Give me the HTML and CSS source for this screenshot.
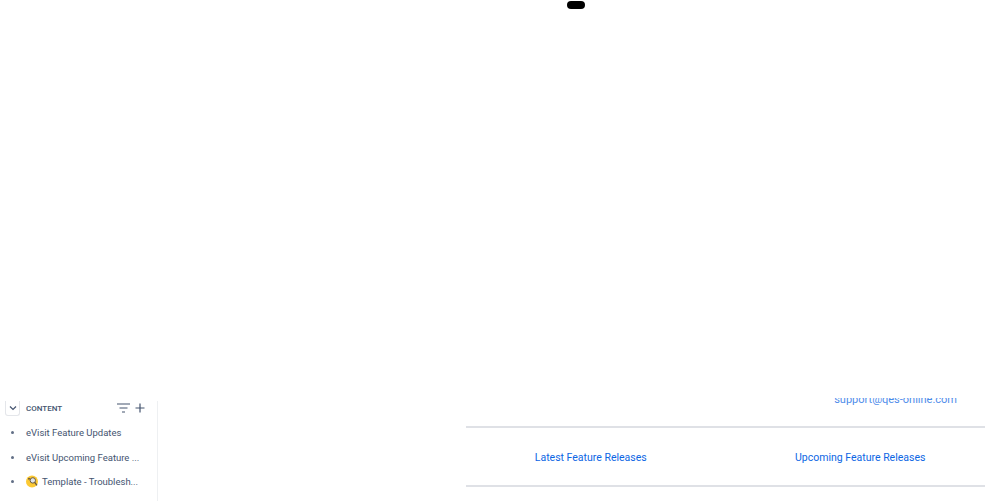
FILE: index.html
```html
<!DOCTYPE html>
<html lang="en">
<head>
<meta charset="utf-8">
<title>eVisit</title>
<link rel="stylesheet" href="styles.css">
</head>
<body>
<div class="pill"></div>
<div class="blank"></div>
<div class="stage">
  <aside class="sidebar">
    <div class="side-head">
      <button class="toggle" aria-label="Collapse">
        <svg width="8" height="6" viewBox="0 0 8 6"><path d="M1 1.5 4 4.5 7 1.5" fill="none" stroke="#44546f" stroke-width="1.2"/></svg>
      </button>
      <span class="side-title">CONTENT</span>
      <svg class="filter" width="13" height="10" viewBox="0 0 13 10"><path d="M0 1h13M2.5 5h8M5 9h3" fill="none" stroke="#44546f" stroke-width="1.2"/></svg>
      <svg class="plus" width="10" height="10" viewBox="0 0 10 10"><path d="M5 .5v9M.5 5h9" fill="none" stroke="#44546f" stroke-width="1.2"/></svg>
    </div>
    <ul class="tree">
      <li class="tree-item"><span class="bullet"></span><span class="label">eVisit Feature Updates</span></li>
      <li class="tree-item"><span class="bullet"></span><span class="label">eVisit Upcoming Feature ...</span></li>
      <li class="tree-item"><span class="bullet"></span>
        <svg class="emoji" width="12" height="13" viewBox="0 0 12 13"><circle cx="6" cy="6.5" r="6" fill="#fcc934"/><circle cx="6.8" cy="5.4" r="2.7" fill="#dfe3e8" stroke="#6b5a3c" stroke-width="1"/><circle cx="3" cy="3.8" r="1" fill="#6b5a3c"/><path d="M8.8 7.5 11 10.4" stroke="#6b5a3c" stroke-width="1.3"/></svg>
        <span class="label">Template - Troublesh...</span></li>
    </ul>
  </aside>
  <main class="content">
    <div class="row-contact"><a class="link contact">support@qes-online.com</a></div>
    <div class="row-links">
      <a class="link">Latest Feature Releases</a>
      <a class="link">Upcoming Feature Releases</a>
    </div>
  </main>
</div>
</body>
</html>
```
FILE: styles.css
```css
html, body {
  margin: 0;
  height: 501px;
  overflow: hidden;
  background: #fff;
  font-family: Roboto, "Noto Sans", sans-serif;
}
.pill {
  position: absolute;
  left: 567px;
  top: 1px;
  width: 18px;
  height: 8px;
  border-radius: 4px;
  background: #000;
}
.blank { height: 398px; }
.stage {
  display: flex;
  height: 103px;
}
.sidebar {
  width: 157px;
  margin-top: 3px;
  border-right: 1px solid #eef0f2;
  flex: none;
}
.side-head {
  display: flex;
  align-items: center;
  height: 14px;
  padding-left: 5px;
}
.toggle {
  width: 15px;
  height: 15px;
  padding: 0;
  display: flex;
  align-items: center;
  justify-content: center;
  background: #fff;
  border: 1px solid #e4e6ea;
  border-top: 0;
  border-radius: 0 0 3px 3px;
}
.side-title {
  margin-left: 6px;
  font-size: 8px;
  font-weight: 500;
  color: #44546f;
  flex: 1;
}
.filter { margin-right: 5px; }
.plus { margin-right: 12px; }
.tree {
  list-style: none;
  margin: 5.5px 0 0;
  padding: 0;
}
.tree-item {
  display: flex;
  align-items: center;
  height: 24.5px;
  font-size: 9.5px;
  color: #44546f;
  white-space: nowrap;
}
.bullet {
  width: 3px;
  height: 3px;
  margin-left: 11px;
  margin-right: 12px;
  border-radius: 50%;
  background: #626f86;
}
.emoji { margin-right: 4px; }
.content {
  width: 519px;
  margin-left: 308px;
  overflow: hidden;
}
.link {
  color: #0c66e4;
  font-size: 10.5px;
  white-space: nowrap;
}
.row-contact {
  display: flex;
  justify-content: flex-end;
  height: 28px;
  padding-right: 28px;
  border-bottom: 2px solid #dfe1e6;
}
.contact {
  margin-top: -5px;
  font-size: 11px;
  line-height: 14px;
  opacity: 0.75;
}
.row-links {
  display: grid;
  grid-template-columns: 1fr 1fr;
  gap: 20px;
  justify-items: center;
  align-items: center;
  height: 59px;
  padding-top: 1px;
  box-sizing: border-box;
  border-bottom: 2px solid #dfe1e6;
}
```
